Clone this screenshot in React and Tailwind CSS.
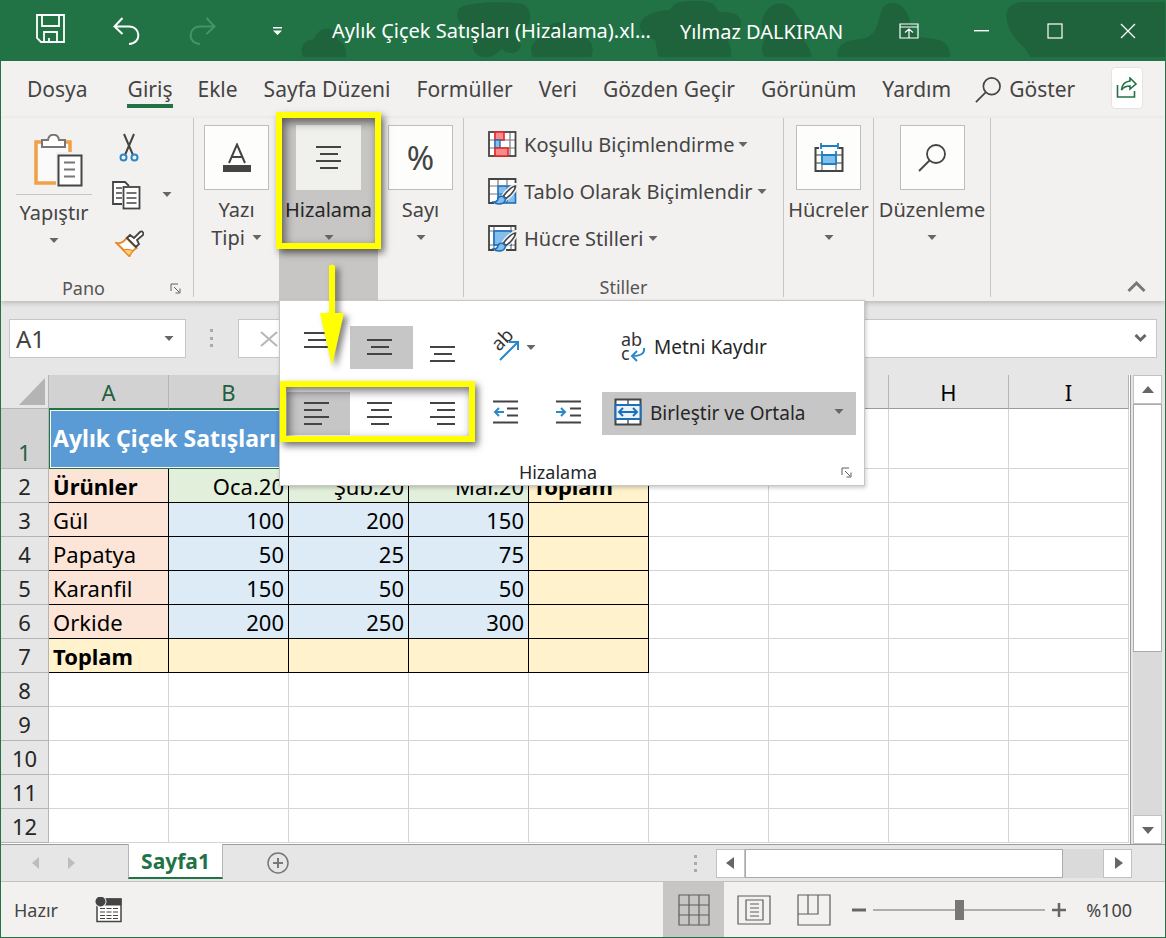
import React, { useState } from "react";

const tabs = [
  "Ekle",
  "Sayfa Düzeni",
  "Formüller",
  "Veri",
  "Gözden Geçir",
  "Görünüm",
  "Yardım",
];

const columns = ["A", "B", "C", "D", "E", "F", "G", "H", "I"];

const products = [
  { no: 3, name: "Gül", sales: [100, 200, 150] },
  { no: 4, name: "Papatya", sales: [50, 25, 75] },
  { no: 5, name: "Karanfil", sales: [150, 50, 50] },
  { no: 6, name: "Orkide", sales: [200, 250, 300] },
];

const emptyRows = [8, 9, 10, 11, 12];

const Caret = ({ className = "" }) => (
  <svg
    width="10"
    height="6"
    viewBox="0 0 10 6"
    className={`shrink-0 ${className}`}
    aria-hidden="true"
  >
    <path d="M0.500 0h9L5 5z" fill="#666" />
  </svg>
);

const Launcher = () => (
  <svg width="11" height="11" viewBox="0 0 11 11" fill="none" stroke="#605e5c">
    <path d="M1 8V1h7M4 4l5 5M10 5.5V10H5.5" />
  </svg>
);

// lines: [x, width] pairs, one for each stroke
const Lines = ({ lines }) => (
  <svg width="26" height={lines.length * 7} className="block">
    {lines.map(([x, w], i) => (
      <rect key={i} x={x} y={i * 7 + 2} width={w} height="2" fill="#444" />
    ))}
  </svg>
);

const ALIGN_CENTER = [
  [0, 25],
  [4, 18],
  [0, 25],
  [4, 18],
];
const ALIGN_LEFT = [
  [0, 25],
  [0, 18],
  [0, 25],
  [0, 18],
];
const ALIGN_RIGHT = [
  [0, 25],
  [7, 18],
  [0, 25],
  [7, 18],
];
const VERTICAL = [
  [0, 25],
  [4, 18],
  [0, 25],
];

const SearchIcon = ({ size }) => (
  <svg
    width={size}
    height={size}
    viewBox="0 0 28 28"
    fill="none"
    stroke="#444"
    strokeWidth="1.8"
  >
    <circle cx="18" cy="10" r="9" />
    <path d="M11.500 16.500L1 27" />
  </svg>
);

const Brush = () => (
  <g>
    <path
      d="M28 7.500c-3 0-10 6-13 11l2.500 2.500c5-3 10.500-9 10.500-13.500z"
      fill="#fff"
      stroke="#f3f1ef"
      strokeWidth="4"
    />
    <path
      d="M27.500 8c-3 0-9 5.500-12 10l2.500 2.500c4.500-3 9.500-9 9.500-12.500z"
      fill="#fff"
      stroke="#444"
      strokeWidth="1.600"
    />
    <path
      d="M15 18.500c-4-1-5 1.500-5.500 3.500-.500 1.500-2 2-4 2 3 3 11.500 3 12-3z"
      fill="#83beec"
      stroke="#1e6fb8"
      strokeWidth="1.600"
    />
  </g>
);

const ConditionalIcon = () => (
  <svg width="29" height="27" viewBox="0 0 29 27" fill="none">
    <rect x="1" y="1" width="26.500" height="24" fill="#fff" />
    <path d="M1 9h26M1 17h26M7 1v24M22 1v24" stroke="#777" strokeWidth="1.200" />
    <rect x="1" y="1" width="26.500" height="24" stroke="#444" strokeWidth="1.800" />
    <rect x="7" y="1" width="9" height="8" fill="#f98b8b" stroke="#e02b2b" strokeWidth="1.600" />
    <rect x="7" y="9" width="5" height="8" fill="#83beec" stroke="#1e6fb8" strokeWidth="1.400" />
    <rect x="7" y="17" width="13" height="8" fill="#f98b8b" stroke="#e02b2b" strokeWidth="1.600" />
  </svg>
);

const FormatTableIcon = () => (
  <svg width="29" height="27" viewBox="0 0 29 27" fill="none">
    <rect x="1" y="1" width="26.500" height="24" fill="#fff" />
    <rect x="10" y="8" width="17.500" height="17" fill="#83beec" stroke="#1e6fb8" strokeWidth="1.600" />
    <path d="M19 8v17M10 16h17" stroke="#1e6fb8" strokeWidth="1.200" />
    <path d="M1 8h9M1 16h9M10 1v7M19 1v7" stroke="#777" strokeWidth="1.200" />
    <path d="M27.500 5V1H1v24h5" stroke="#444" strokeWidth="1.800" />
    <Brush />
  </svg>
);

const CellStylesIcon = () => (
  <svg width="29" height="27" viewBox="0 0 29 27" fill="none">
    <rect x="1" y="1" width="26.500" height="24" fill="#fff" />
    <path d="M6 1v24M1 6h26M1 20h26M23 1v24" stroke="#777" strokeWidth="1.200" />
    <rect x="6" y="6" width="17" height="14" fill="#83beec" stroke="#1e6fb8" strokeWidth="1.600" />
    <path d="M27.500 5V1H1v24h5M18 25h9.500V12" stroke="#444" strokeWidth="1.800" />
    <Brush />
  </svg>
);

const TileButton = ({ width, label, label2, icon }) => (
  <button
    type="button"
    className={`flex flex-col items-center pt-[7px] text-xl leading-7 text-[#444] ${width}`}
  >
    <span className="mb-[6px] flex size-[65px] items-center justify-center border border-[#c0bebc] bg-[#fdfefb]">
      {icon}
    </span>
    <span>{label}</span>
    <span className="flex h-7 items-center gap-[7px]">
      {label2}
      <Caret />
    </span>
  </button>
);

const Separator = () => <div className="mb-1 w-px shrink-0 bg-[#c8c6c4]" />;

const TitleBar = () => (
  <header className="relative flex h-[61px] shrink-0 items-center overflow-hidden bg-[#217346] text-white">
    <svg
      width="1166"
      height="61"
      viewBox="0 0 1166 61"
      className="absolute top-0 right-0"
      fill="#1e633c"
      aria-hidden="true"
    >
      <path d="M304 57c-4-9 0-17 11-18 3-8 9-11 15-10 6 1 8 5 9 11 7 4 9 10 8 17z" />
      <path d="M462 7c10-5 45-6 61-3 7 2 9 10 8 17-1 6-8 9-13 12 3 6 6 14 1 18-5 4-13 2-16-2-5 3-6 7-14 8-8 1-14-3-15-9 1-7 0-13-2-18-12-1-18-17-10-23z" />
      <path d="M534 57c-4-8-2-15 8-20 4-10 12-16 20-15 7 1 10 6 14 13 8 1 15 4 17 10 1 4 1 8-1 12z" />
      <path d="M660 57c-3-5-2-12-4-17-12-3-18-12-14-18 3-8 17-11 29-12 4-6 7-8 11-8 10-1 25-2 32 2 3 2 4 6 6 8 13 0 21 2 22 10 1 10-10 16-13 19 2 5 4 10 3 16z" />
      <path d="M765 57c-4-9-1-15 2-20-8-9-4-23 4-30 8-6 18-4 24 4 3 4 4 8 8 12 8 5 4 14 2 18 4 5 7 10 8 16z" />
      <path d="M839 57c-3-10 6-17 22-18 18-2 17-16 22-30 5-9 17-7 23 1 6 7 4 20 13 27 11 2 33-1 32 20z" />
      <path d="M1031 57c-2-9-14-14-20-27-7-15-4-27 12-28h143v55z" />
    </svg>
    <div className="relative flex w-[313px] shrink-0 items-center pl-[11px]">
      <button type="button" aria-label="Kaydet" className="flex w-[76px] -translate-y-0.5 justify-center">
        <svg width="29" height="30" viewBox="0 0 29 30" fill="none" stroke="#fff" strokeWidth="1.800">
          <path d="M1 1h27v27H5l-4-4zM6 1v11h17V1M8 28V18h13v10M13 28v-4" />
        </svg>
      </button>
      <button type="button" aria-label="Geri Al" className="flex w-[76px] justify-center">
        <svg width="27" height="28" viewBox="0 0 27 28" fill="none" stroke="#fff" strokeWidth="2">
          <path d="M9.500 1L1.500 9.500l8 7.500M2 9.500h14c12 0 13 17 0 17.500" />
        </svg>
      </button>
      <button type="button" aria-label="Yinele" className="flex w-[76px] justify-center">
        <svg width="27" height="28" viewBox="0 0 27 28" fill="none" stroke="#439467" strokeWidth="2">
          <path d="M17.500 1l8 8.500-8 7.500M25 9.500H11c-12 0-13 17 0 17.500" />
        </svg>
      </button>
      <button type="button" aria-label="Özelleştir" className="flex w-[74px] justify-center">
        <svg width="9" height="8" viewBox="0 0 9 8" fill="#fff">
          <path d="M0 0h9v1.500H0zM0 3.500h9L4.500 8z" />
        </svg>
      </button>
    </div>
    <h1 className="relative ml-[18px] text-xl whitespace-nowrap">
      Aylık Çiçek Satışları (Hizalama).xl...
    </h1>
    <span className="relative mx-auto pt-[3px] text-xl whitespace-nowrap">
      Yılmaz DALKIRAN
    </span>
    <div className="relative flex shrink-0 pr-px">
      <button type="button" aria-label="Şerit Görüntüleme" className="flex h-[60px] w-[73px] items-center justify-center">
        <svg width="20" height="16" viewBox="0 0 20 16" fill="none" stroke="#fff" strokeWidth="1.200">
          <path d="M1 1h18v14H1zM1 4h18M10 15V6M6 9.500L10 6l4 3.500" />
        </svg>
      </button>
      <button type="button" aria-label="Simge Durumu" className="flex h-[60px] w-[73px] items-center justify-center">
        <svg width="15" height="2" fill="#fff">
          <rect width="15" height="1.400" />
        </svg>
      </button>
      <button type="button" aria-label="Ekranı Kapla" className="flex h-[60px] w-[73px] items-center justify-center">
        <svg width="16" height="16" fill="none" stroke="#fff" strokeWidth="1.200">
          <rect x="1" y="1" width="14" height="14" />
        </svg>
      </button>
      <button type="button" aria-label="Kapat" className="flex h-[60px] w-[73px] items-center justify-center">
        <svg width="16" height="16" stroke="#fff" strokeWidth="1.300">
          <path d="M1 1l14 14M15 1L1 15" />
        </svg>
      </button>
    </div>
  </header>
);

const TabRow = () => (
  <nav className="flex h-[57px] shrink-0 items-center pr-[22px] pl-[26px] text-[21px] whitespace-nowrap text-[#444]">
    <a href="#dosya" className="mr-10">
      Dosya
    </a>
    <a
      href="#giris"
      className="relative mr-[25px] after:absolute after:-inset-x-px after:top-[30px] after:h-1 after:bg-[#217346]"
    >
      Giriş
    </a>
    <div className="flex gap-[26px]">
      {tabs.map((tab) => (
        <a key={tab} href="#sekme">
          {tab}
        </a>
      ))}
    </div>
    <button type="button" className="ml-6 flex items-center gap-2">
      <SearchIcon size={26} />
      Göster
    </button>
    <button
      type="button"
      aria-label="Paylaş"
      className="-mt-1 ml-auto flex h-[42px] w-8 items-center justify-center rounded border border-[#e6e4e2] bg-white"
    >
      <svg width="22" height="22" viewBox="0 0 22 22" fill="none" stroke="#217346" strokeWidth="1.600">
        <path d="M1.500 8v12h17v-6" />
        <path d="M14 1l6 6-6 5V9c-4 0-6.500 1-8.500 4C6 8 9 4.500 14 4z" />
      </svg>
    </button>
  </nav>
);

const ClipboardGroup = () => (
  <div className="flex w-48 shrink-0 flex-col">
    <div className="flex flex-1 pl-[15px]">
      <button type="button" className="flex w-[76px] flex-col items-center pt-4 text-xl leading-7 text-[#444]">
        <svg width="58" height="54" viewBox="-8 0 58 54" fill="none">
          <rect x="3" y="8" width="34" height="41" fill="#fafafa" stroke="#f0a045" strokeWidth="3.500" />
          <path d="M9 13V6h6c1-7 10-7 11 0h6v7z" fill="#fff" stroke="#777" strokeWidth="2" />
          <rect x="23" y="18" width="27" height="36" fill="#f3f1ef" />
          <rect x="25.500" y="21.500" width="23" height="30" fill="#fff" stroke="#444" strokeWidth="2" />
          <path d="M31 28.500h11M31 35.500h11M31 42.500h11" stroke="#777" strokeWidth="1.800" />
        </svg>
        <span className="mt-[6px] w-full border-t border-[#c8c6c4] pt-1">Yapıştır</span>
        <Caret className="mt-[11px]" />
      </button>
      <div className="flex flex-col pt-[5px] pl-4">
        <button type="button" aria-label="Kes" className="flex h-12 w-[42px] items-center justify-center">
          <svg width="20" height="29" viewBox="0 0 20 29" fill="none" strokeWidth="2">
            <path d="M5 1l9 21M15 1L6 22" stroke="#444" />
            <circle cx="4.500" cy="24.500" r="3" stroke="#2b88c8" />
            <circle cx="15.500" cy="24.500" r="3" stroke="#2b88c8" />
          </svg>
        </button>
        <div className="flex h-12 items-center">
          <button type="button" aria-label="Kopyala" className="flex w-9 justify-center">
            <svg width="29" height="29" viewBox="0 0 29 29" fill="none" stroke="#444" strokeWidth="1.800">
              <path d="M10 23H1V1h12l4 4" fill="#fff" />
              <path d="M4 7h6M4 12h6M4 17h6" strokeWidth="1.300" />
              <rect x="11.500" y="6" width="16" height="21.500" fill="#fff" />
              <path d="M14.500 12h10M14.500 17h10M14.500 22h10" strokeWidth="1.400" />
            </svg>
          </button>
          <button type="button" aria-label="Kopyala seçenekleri" className="pl-[18px]">
            <Caret />
          </button>
        </div>
        <button type="button" aria-label="Biçim Boyacısı" className="flex h-12 w-[42px] items-center justify-center">
          <svg width="29" height="27" viewBox="0 0 29 27" fill="none">
            <path d="M1.500 13c5 1 8-2 10-5l10 10c-3 2-6 4-7 8z" fill="#fff" stroke="#e8872b" strokeWidth="2" />
            <path d="M8 20c4-1 7-1 10 1l-4 5z" fill="#fbd36b" stroke="#e8872b" strokeWidth="1.200" />
            <path d="M12 8l3-3 4 3 6-6c2-2 4 1 3 3l-6 5 2 4-3 3z" fill="#fff" stroke="#444" strokeWidth="1.800" />
          </svg>
        </button>
      </div>
    </div>
    <div className="flex h-[26px] items-center text-lg leading-6 text-[#555]">
      <span className="w-[165px] text-center">Pano</span>
      <button type="button" aria-label="Pano ayarları" className="ml-1">
        <Launcher />
      </button>
    </div>
  </div>
);

const AlignButton = ({ label, lines, pressed, place = "items-center" }) => (
  <button
    type="button"
    aria-label={label}
    className={`flex h-[43px] w-[63px] justify-center pr-1 ${place} ${
      pressed ? "bg-[#c6c6c6]" : ""
    }`}
  >
    <Lines lines={lines} />
  </button>
);

// Flyout that hangs under the alignment button
const AlignmentPanel = () => (
  <div className="absolute top-full left-0 z-10 -mt-px h-[186px] w-[586px] border border-[#c6c6c6] bg-white text-[#262626] shadow-[1px_2px_4px_rgba(0,0,0,0.2)]">
    <div className="flex pt-[25px] pl-[7px]">
      <AlignButton label="Üste Hizala" lines={VERTICAL} place="items-start pt-1" />
      <AlignButton label="Ortaya Hizala" lines={VERTICAL} pressed />
      <AlignButton label="Alta Hizala" lines={VERTICAL} place="items-end pb-1" />
      <button type="button" aria-label="Yönlendirme" className="flex h-[43px] w-[126px] items-center gap-1 pl-4">
        <svg width="30" height="32" viewBox="0 0 30 32" fill="none" className="overflow-visible">
          <text transform="translate(7 20) rotate(-45)" fontSize="19" fill="#333">
            ab
          </text>
          <path d="M8 28L26 10M17 10h9v8" stroke="#2b88c8" strokeWidth="2" />
        </svg>
        <Caret />
      </button>
      <button type="button" className="flex h-[43px] items-center gap-2 pl-[18px] text-[19px]">
        <svg width="26" height="30" viewBox="0 0 26 30" fill="none" className="overflow-visible">
          <text x="1" y="13" fontSize="18" fill="#333">
            ab
          </text>
          <text x="1" y="27" fontSize="18" fill="#333">
            c
          </text>
          <path d="M24 15c1 6-4 8-12 8M17 18l-5 5 5 5" stroke="#2b88c8" strokeWidth="2" />
        </svg>
        Metni Kaydır
      </button>
    </div>
    <div className="flex pt-[23px] pl-[7px]">
      <AlignButton label="Sola Hizala" lines={ALIGN_LEFT} pressed />
      <AlignButton label="Ortala" lines={ALIGN_CENTER} />
      <AlignButton label="Sağa Hizala" lines={ALIGN_RIGHT} />
      <button type="button" aria-label="Girintiyi Azalt" className="flex h-[43px] w-[63px] items-center justify-center pr-1 pb-1">
        <svg width="26" height="24" viewBox="0 0 26 24" fill="none" stroke="#444" strokeWidth="2">
          <path d="M0 1.500h25M14 8.500h11M14 15.500h11M0 22.500h25" />
          <path d="M11 12H2M6 8l-4 4 4 4" stroke="#2b88c8" />
        </svg>
      </button>
      <button type="button" aria-label="Girintiyi Artır" className="flex h-[43px] w-[63px] items-center justify-center pr-1 pb-1">
        <svg width="26" height="24" viewBox="0 0 26 24" fill="none" stroke="#444" strokeWidth="2">
          <path d="M0 1.500h25M14 8.500h11M14 15.500h11M0 22.500h25" />
          <path d="M0 12h9M5 8l4 4-4 4" stroke="#2b88c8" />
        </svg>
      </button>
      <button type="button" className="flex h-[43px] w-[254px] items-center bg-[#c6c6c6] px-3 pb-1 text-[19px]">
        <svg width="28" height="28" viewBox="0 0 28 28" fill="none" stroke="#444" strokeWidth="2">
          <rect x="1.500" y="1.500" width="25" height="25" fill="#fff" />
          <path d="M14 2v5M14 21v5" strokeWidth="1.300" />
          <rect x="1.500" y="7" width="25" height="14" fill="#e8f3fc" stroke="#1e6fb8" />
          <path d="M5 14h18M9 10l-4 4 4 4M19 10l4 4-4 4" stroke="#1e6fb8" />
        </svg>
        <span className="ml-2 pt-1">Birleştir ve Ortala</span>
        <Caret className="ml-auto" />
      </button>
    </div>
    <div className="mt-[25px] flex items-center text-lg leading-6">
      <span className="w-[556px] text-center">Hizalama</span>
      <button type="button" aria-label="Hizalama ayarları" className="ml-[5px]">
        <Launcher />
      </button>
    </div>
    {/* callout round the horizontal alignment buttons */}
    <div className="pointer-events-none absolute top-20 left-0 h-[61px] w-[195px] border-[6px] border-[#ffff00] shadow-[3px_4px_7px_rgba(0,0,0,0.55),inset_3px_4px_10px_rgba(0,0,0,0.55)]" />
    <svg
      width="46"
      height="112"
      viewBox="0 0 46 112"
      className="pointer-events-none absolute -top-[37px] left-[33px] drop-shadow-[4px_3px_3px_rgba(0,0,0,0.5)]"
      fill="#ffff00"
      aria-hidden="true"
    >
      <path d="M16 2q3-3 6 0v47h9L19 102 7 49h9z" />
    </svg>
  </div>
);

const AlignmentButton = () => {
  const [open, setOpen] = useState(true);

  return (
    <div className="relative flex w-[99px] bg-[#c8c6c4]">
      <button
        type="button"
        aria-expanded={open}
        onClick={() => setOpen(!open)}
        className="flex w-full flex-col items-center pt-[7px] text-xl leading-7 text-[#262626]"
      >
        <span className="mb-[6px] flex size-[65px] items-center justify-center bg-[#f0f0ed]">
          <Lines lines={ALIGN_CENTER} />
        </span>
        <span>Hizalama</span>
        <span className="flex h-7 items-center">
          <Caret />
        </span>
      </button>
      <div className="pointer-events-none absolute -top-[6px] -left-[3px] h-[137px] w-[105px] border-[6px] border-[#ffff00] shadow-[3px_4px_7px_rgba(0,0,0,0.55),inset_3px_4px_10px_rgba(0,0,0,0.55)]" />
      {open && <AlignmentPanel />}
    </div>
  );
};

const styleButtons = [
  { label: "Koşullu Biçimlendirme", icon: <ConditionalIcon /> },
  { label: "Tablo Olarak Biçimlendir", icon: <FormatTableIcon /> },
  { label: "Hücre Stilleri", icon: <CellStylesIcon /> },
];

const Ribbon = () => (
  <div className="relative z-10 flex h-[183px] shrink-0 shadow-[0_2px_5px_rgba(0,0,0,0.2)]">
    <ClipboardGroup />
    <Separator />
    <TileButton
      width="w-[85px]"
      label="Yazı"
      label2="Tipi"
      icon={
        <svg width="28" height="30" viewBox="0 0 28 30" fill="none">
          <path d="M6 20L14 1.500 22 20M9 14h10" stroke="#444" strokeWidth="2" />
          <rect y="22" width="28" height="7" fill="#444" />
        </svg>
      }
    />
    <AlignmentButton />
    <TileButton
      width="w-[85px]"
      label="Sayı"
      icon={<span className="text-[33px]">%</span>}
    />
    <Separator />
    <div className="flex w-[319px] flex-col">
      <div className="flex flex-1 flex-col items-start pt-[3px] pl-6">
        {styleButtons.map((item) => (
          <button
            key={item.label}
            type="button"
            className="flex h-[47px] items-center text-xl whitespace-nowrap text-[#444]"
          >
            {item.icon}
            <span className="mr-1 ml-[7px]">{item.label}</span>
            <Caret />
          </button>
        ))}
      </div>
      <div className="h-[26px] text-center text-lg leading-6 text-[#555]">Stiller</div>
    </div>
    <Separator />
    <TileButton
      width="w-[89px]"
      label="Hücreler"
      icon={
        <svg width="30" height="30" viewBox="0 0 30 30" fill="none">
          <path d="M1.500 12h27M1.500 20h27M8 12v16M22 12v16" stroke="#777" strokeWidth="1.300" />
          <path d="M5 5H1.500v23h27V5H25" stroke="#444" strokeWidth="2" />
          <rect x="8" y="12" width="14" height="9" fill="#83beec" />
          <path d="M8 8v14M22 8v14M8 12h14M8 21h14M7 3h17M7 0v6M24 0v6" stroke="#1e7fc0" strokeWidth="1.800" />
        </svg>
      }
    />
    <Separator />
    <TileButton width="w-[116px]" label="Düzenleme" icon={<SearchIcon size={28} />} />
    <Separator />
    <button type="button" aria-label="Şeridi Daralt" className="mt-auto mr-[19px] mb-2 ml-auto">
      <svg width="19" height="13" viewBox="0 0 19 13" fill="none" stroke="#777" strokeWidth="3">
        <path d="M1.500 11l8-8 8 8" />
      </svg>
    </button>
  </div>
);

const FormulaBar = () => (
  <div className="flex h-[74px] shrink-0 items-start bg-[#e6e6e6] pt-[18px] pr-2 pl-2">
    <div className="flex h-[39px] w-[177px] items-center border border-[#c6c6c6] bg-white pr-[11px]">
      <input
        aria-label="Ad Kutusu"
        defaultValue="A1"
        className="w-full min-w-0 pl-[6px] text-2xl text-[#444] outline-none"
      />
      <Caret />
    </div>
    <svg width="5" height="20" className="mr-6 ml-[23px] mt-[10px] shrink-0" fill="#aaa">
      <rect width="3" height="3" x="1" y="0" />
      <rect width="3" height="3" x="1" y="8" />
      <rect width="3" height="3" x="1" y="15" />
    </svg>
    <div className="flex h-[39px] flex-1 items-center border border-[#c6c6c6] bg-white pr-[9px] pl-[21px]">
      <button type="button" aria-label="İptal">
        <svg width="18" height="16" viewBox="0 0 18 16" stroke="#b8b8b8" strokeWidth="2.200">
          <path d="M1 1l16 14M17 1L1 15" />
        </svg>
      </button>
      <input aria-label="Formül Çubuğu" className="min-w-0 flex-1 px-3 text-[21px] outline-none" />
      <button type="button" aria-label="Formül Çubuğunu Genişlet">
        <svg width="13" height="9" viewBox="0 0 13 9" fill="none" stroke="#666" strokeWidth="3">
          <path d="M1.500 1l5 5 5-5" />
        </svg>
      </button>
    </div>
  </div>
);

const RowHead = ({ no, active }) => (
  <th
    scope="row"
    className={`border-r border-b border-[#b5b5b5] pb-px text-center align-bottom font-normal ${
      active ? "bg-[#d2d2d2] text-[#20603f]" : "bg-[#e6e6e6] text-[#262626]"
    }`}
  >
    {no}
  </th>
);

const EmptyCells = ({ count }) =>
  Array.from({ length: count }, (_, i) => (
    <td key={i} className="border-r border-b border-[#d4d4d4]" />
  ));

const Sheet = () => (
  <table className="border-separate border-spacing-0 bg-white text-[22px] leading-[30px] text-black">
    <colgroup>
      <col className="w-12 min-w-12" />
      {columns.map((c) => (
        <col key={c} className="w-[120px] min-w-[120px]" />
      ))}
    </colgroup>
    <thead>
      <tr className="h-[34px]">
        <th className="border-r border-b border-[#b5b5b5] bg-[#e6e6e6] p-0 align-bottom">
          <svg width="26" height="27" className="mr-[3px] mb-[3px] ml-auto block">
            <path d="M26 0v27H0z" fill="#b4b4b4" />
          </svg>
        </th>
        {columns.map((c, i) => (
          <th
            key={c}
            scope="col"
            className={`border-r border-b p-0 pb-px align-bottom font-normal ${
              i < 5
                ? "border-r-[#b5b5b5] border-b-[#217346] bg-[#d2d2d2] text-[#20603f]"
                : "border-r-[#b5b5b5] border-b-[#9a9a9a] bg-[#e6e6e6]"
            }`}
          >
            {c}
          </th>
        ))}
      </tr>
    </thead>
    <tbody>
      <tr className="h-[60px]">
        <RowHead no={1} active />
        <td
          colSpan={5}
          className="border-2 border-t-[1px] border-l-[1px] border-[#217346] bg-[#5b9bd5] px-[3px] pb-0.5 text-left align-middle text-[23px] font-bold text-white outline-1 -outline-offset-2 outline-white"
        >
          Aylık Çiçek Satışları
        </td>
        <EmptyCells count={4} />
      </tr>
      <tr className="h-[34px]">
        <RowHead no={2} />
        <td className="border-r border-b bg-[#fce4d6] px-1 pb-px align-bottom font-bold">Ürünler</td>
        {["Oca.20", "Şub.20", "Mar.20"].map((month) => (
          <td key={month} className="border-r border-b bg-[#e2efda] px-1 pb-px text-right align-bottom">
            {month}
          </td>
        ))}
        <td className="border-r border-b bg-[#fff2cc] px-1 pb-px align-bottom font-bold">Toplam</td>
        <EmptyCells count={4} />
      </tr>
      {products.map((product) => (
        <tr key={product.no} className="h-[34px]">
          <RowHead no={product.no} />
          <td className="border-r border-b bg-[#fce4d6] px-1 pb-px align-bottom">{product.name}</td>
          {product.sales.map((value, i) => (
            <td key={i} className="border-r border-b bg-[#ddebf7] px-1 pb-px text-right align-bottom">
              {value}
            </td>
          ))}
          <td className="border-r border-b bg-[#fff2cc]" />
          <EmptyCells count={4} />
        </tr>
      ))}
      <tr className="h-[34px]">
        <RowHead no={7} />
        <td className="border-r border-b bg-[#fff2cc] px-1 pb-px align-bottom font-bold">Toplam</td>
        {[1, 2, 3, 4].map((i) => (
          <td key={i} className="border-r border-b bg-[#fff2cc]" />
        ))}
        <EmptyCells count={4} />
      </tr>
      {emptyRows.map((no) => (
        <tr key={no} className="h-[34px]">
          <RowHead no={no} />
          <EmptyCells count={9} />
        </tr>
      ))}
    </tbody>
  </table>
);

const ScrollArrow = ({ label, path, size = "h-[29px] w-[29px]" }) => (
  <button
    type="button"
    aria-label={label}
    className={`flex shrink-0 items-center justify-center border border-[#c2c2c2] bg-white ${size}`}
  >
    <svg width="14" height="14" viewBox="0 0 14 14" fill="#666">
      <path d={path} />
    </svg>
  </button>
);

const SheetTabs = () => (
  <div className="flex h-[38px] shrink-0 items-center border-t border-b border-t-[#9a9a9a] border-b-[#c2c2c2] bg-[#e6e6e6]">
    <div className="flex w-[127px] gap-[29px] pl-[31px]">
      <button type="button" aria-label="Önceki sayfa">
        <svg width="7" height="12" fill="#bdbdbd">
          <path d="M7 0v12L0 6z" />
        </svg>
      </button>
      <button type="button" aria-label="Sonraki sayfa">
        <svg width="7" height="12" fill="#bdbdbd">
          <path d="M0 0v12l7-6z" />
        </svg>
      </button>
    </div>
    <button
      type="button"
      className="-mt-px h-[35px] w-[95px] self-start border-r border-b-2 border-l border-x-[#b5b5b5] border-b-[#217346] bg-white text-[21px] leading-8 font-bold text-[#217346]"
    >
      Sayfa1
    </button>
    <button type="button" aria-label="Yeni sayfa" className="ml-11">
      <svg width="22" height="22" fill="none" stroke="#777" strokeWidth="1.500">
        <circle cx="11" cy="11" r="10" />
        <path d="M11 6v10M6 11h10" strokeWidth="2" />
      </svg>
    </button>
    <svg width="4" height="17" className="mr-[18px] ml-auto" fill="#aaa">
      <rect width="3" height="3" y="0" />
      <rect width="3" height="3" y="7" />
      <rect width="3" height="3" y="14" />
    </svg>
    <div className="mr-[33px] flex h-[29px] w-[416px] bg-[#dadada]">
      <ScrollArrow label="Sola kaydır" path="M10 1v12L2 7z" />
      <div className="w-[318px] border border-[#ababab] bg-white" />
      <span className="flex-1" />
      <ScrollArrow label="Sağa kaydır" path="M4 1v12l8-6z" />
    </div>
  </div>
);

const StatusBar = () => {
  const [zoom, setZoom] = useState(100);

  return (
    <footer className="flex h-[55px] shrink-0 items-center pl-[13px] text-lg text-[#444]">
      <span>Hazır</span>
      <button type="button" aria-label="Makro Kaydet" className="ml-[37px]">
        <svg width="27" height="26" viewBox="0 0 27 26" fill="none">
          <rect x="2" y="2" width="24" height="22.500" fill="#fff" stroke="#444" strokeWidth="1.500" />
          <rect x="1.500" y="1.500" width="25" height="7" fill="#444" />
          <path
            d="M5 11.500h18M5 15h18M5 18.500h18M5 21.500h18"
            stroke="#444"
            strokeWidth="1.200"
            strokeDasharray="5 1.500"
          />
          <circle cx="5.500" cy="4.500" r="6" fill="#f3f1ef" />
          <circle cx="5.500" cy="4.500" r="5" fill="#444" />
        </svg>
      </button>
      <div className="ml-auto flex h-full">
        <button type="button" aria-label="Normal" className="flex w-[61px] items-center justify-center bg-[#c8c6c4]">
          <svg width="32" height="32" fill="none" stroke="#605e5c" strokeWidth="1.200">
            <path d="M1 1h30v30H1zM11 1v30M21 1v30M1 11h30M1 21h30" />
          </svg>
        </button>
        <button type="button" aria-label="Sayfa Düzeni" className="flex w-[60px] items-center justify-center">
          <svg width="34" height="30" fill="none" stroke="#605e5c" strokeWidth="1.200">
            <path d="M1 1h32v28H1z" />
            <path d="M9 5h17v20H9z" />
            <path d="M13 9h9M13 13h9M13 17h9M13 21h9" />
          </svg>
        </button>
        <button type="button" aria-label="Sayfa Sonu Önizleme" className="flex w-[60px] items-center justify-center">
          <svg width="34" height="32" fill="none" stroke="#605e5c" strokeWidth="1.200">
            <path d="M1 1h32v30H1zM1 20h20V1M11 1v19" />
          </svg>
        </button>
      </div>
      <button type="button" aria-label="Uzaklaştır" className="ml-2" onClick={() => setZoom(zoom - 10)}>
        <svg width="14" height="14" stroke="#666" strokeWidth="3">
          <path d="M0 7h14" />
        </svg>
      </button>
      <input
        type="range"
        aria-label="Yakınlaştırma"
        min="10"
        max="190"
        value={zoom}
        onChange={(e) => setZoom(Number(e.target.value))}
        className="mx-[7px] h-5 w-[172px] appearance-none bg-transparent [&::-webkit-slider-runnable-track]:h-0.5 [&::-webkit-slider-runnable-track]:bg-[#b0aeac] [&::-webkit-slider-thumb]:-mt-[9px] [&::-webkit-slider-thumb]:h-5 [&::-webkit-slider-thumb]:w-[9px] [&::-webkit-slider-thumb]:appearance-none [&::-webkit-slider-thumb]:bg-[#777]"
      />
      <button type="button" aria-label="Yakınlaştır" onClick={() => setZoom(zoom + 10)}>
        <svg width="14" height="14" stroke="#666" strokeWidth="2.500">
          <path d="M0 7h14M7 0v14" />
        </svg>
      </button>
      <span className="mr-[33px] ml-5">%{zoom}</span>
    </footer>
  );
};

const App = () => {
  return (
    <div className="flex min-h-screen flex-col overflow-hidden border-x border-b border-[#217346] bg-[#f3f1ef] font-['Noto_Sans','Open_Sans',sans-serif]">
      <TitleBar />
      <TabRow />
      <Ribbon />
      <FormulaBar />
      <main className="flex flex-1 bg-[#e6e6e6]">
        <div className="min-w-0 flex-1 overflow-hidden border-r border-[#9a9a9a] bg-white">
          <Sheet />
        </div>
        <div className="mr-[3px] ml-[2px] flex w-[29px] flex-col bg-[#dadada]">
          <ScrollArrow label="Yukarı kaydır" path="M7 3l6 7H1z" />
          <div className="h-[248px] border border-[#ababab] bg-white" />
          <span className="flex-1" />
          <ScrollArrow label="Aşağı kaydır" path="M1 4h12l-6 7z" />
        </div>
      </main>
      <SheetTabs />
      <StatusBar />
    </div>
  );
};

export default App;
